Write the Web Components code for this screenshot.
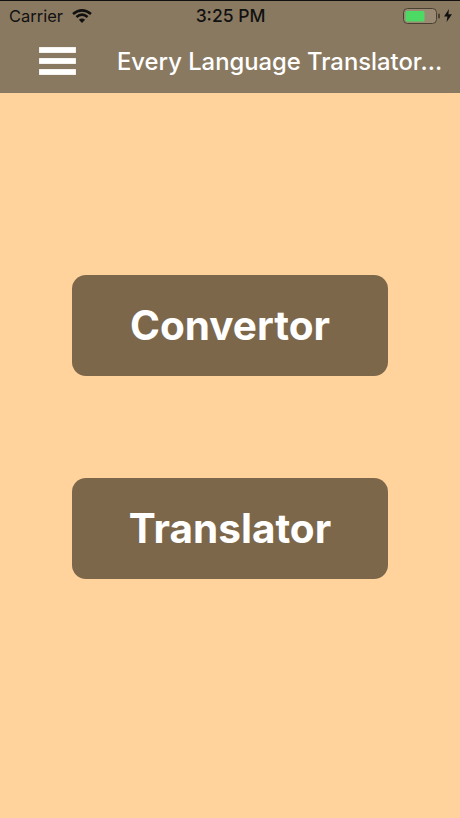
<!DOCTYPE html>
<html>
<head>
<meta charset="utf-8">
<style>
  html, body { margin: 0; height: 100%; }
  body { font-family: Inter, "Liberation Sans", sans-serif; }
</style>
</head>
<body>
<app-screen>
  <status-bar slot="top"></status-bar>
  <nav-bar slot="top" title="Every Language Translator..."></nav-bar>
  <big-button>Convertor</big-button>
  <big-button>Translator</big-button>
</app-screen>
<script>
class AppScreen extends HTMLElement {
  constructor() {
    super();
    this.attachShadow({ mode: "open" });
    this.shadowRoot.innerHTML = `
    <style>
      :host { display: flex; flex-direction: column; width: 460px; height: 818px; background: #ffd39b; }
      .head { background: #8a7961; border-top: 1px solid #111; }
      .main { display: flex; flex-direction: column; align-items: center; gap: 102px; padding-top: 182px; }
    </style>
    <div class="head"><slot name="top"></slot></div>
    <div class="main"><slot></slot></div>`;
  }
}

class StatusBar extends HTMLElement {
  constructor() {
    super();
    this.attachShadow({ mode: "open" });
    this.shadowRoot.innerHTML = `
    <style>
      :host { display: grid; grid-template-columns: 1fr auto 1fr; align-items: center; height: 29px; padding: 0 8px 2px 9px; color: #111; font: 400 16.5px Inter, sans-serif; }
      .left { display: flex; align-items: center; gap: 9px; }
      .time { font-weight: 500; font-size: 17.5px; }
      .right { display: flex; align-items: center; justify-content: flex-end; gap: 4px; }
      svg { display: block; }
    </style>
    <div class="left">
      <span>Carrier</span>
      <svg width="20" height="14" viewBox="0 0 20 14" fill="none" stroke="#111" stroke-width="2.6">
        <path d="M1 5 Q10 -2.2 19 5"/>
        <path d="M4.4 8 Q10 3.2 15.6 8"/>
        <path d="M10 14 L6.9 10.7 Q10 8.4 13.1 10.7 Z" fill="#111" stroke="none"/>
      </svg>
    </div>
    <span class="time">3:25 PM</span>
    <div class="right">
      <svg width="37" height="16" viewBox="0 0 37 16">
        <rect x="0.5" y="0.5" width="33" height="15" rx="4" fill="#9a8a74" stroke="#4a4031"/>
        <rect x="2.5" y="3" width="19" height="10.5" rx="1.5" fill="#4cd964"/>
        <rect x="35" y="5.5" width="2" height="5" rx="1" fill="#4a4031"/>
      </svg>
      <svg width="8" height="13" viewBox="0 0 8 13"><path d="M5 0 L0 7.4 H3.4 L2.6 13 L8 5.2 H4.4 Z" fill="#111"/></svg>
    </div>`;
  }
}

class NavBar extends HTMLElement {
  constructor() {
    super();
    this.attachShadow({ mode: "open" });
    this.shadowRoot.innerHTML = `
    <style>
      :host { display: flex; align-items: center; height: 61px; padding-left: 39px; color: #fff; }
      .burger { display: flex; flex-direction: column; gap: 5px; width: 37px; margin-right: 41px; margin-bottom: 3px; }
      .burger i { display: block; height: 6px; background: #fff; box-shadow: inset 0 0 1px #8a7961; }
      .title { font: 500 23.8px Inter, sans-serif; white-space: nowrap; margin-bottom: 2px; }
    </style>
    <div class="burger"><i></i><i></i><i></i></div>
    <div class="title">${this.getAttribute("title")}</div>`;
  }
}

class BigButton extends HTMLElement {
  constructor() {
    super();
    this.attachShadow({ mode: "open" });
    this.shadowRoot.innerHTML = `
    <style>
      :host { display: flex; align-items: center; justify-content: center; width: 316px; height: 101px; background: #7d674b; border-radius: 14px; color: #fff; font: 700 40.5px Inter, sans-serif; }
    </style>
    <slot></slot>`;
  }
}

customElements.define("app-screen", AppScreen);
customElements.define("status-bar", StatusBar);
customElements.define("nav-bar", NavBar);
customElements.define("big-button", BigButton);
</script>
</body>
</html>
